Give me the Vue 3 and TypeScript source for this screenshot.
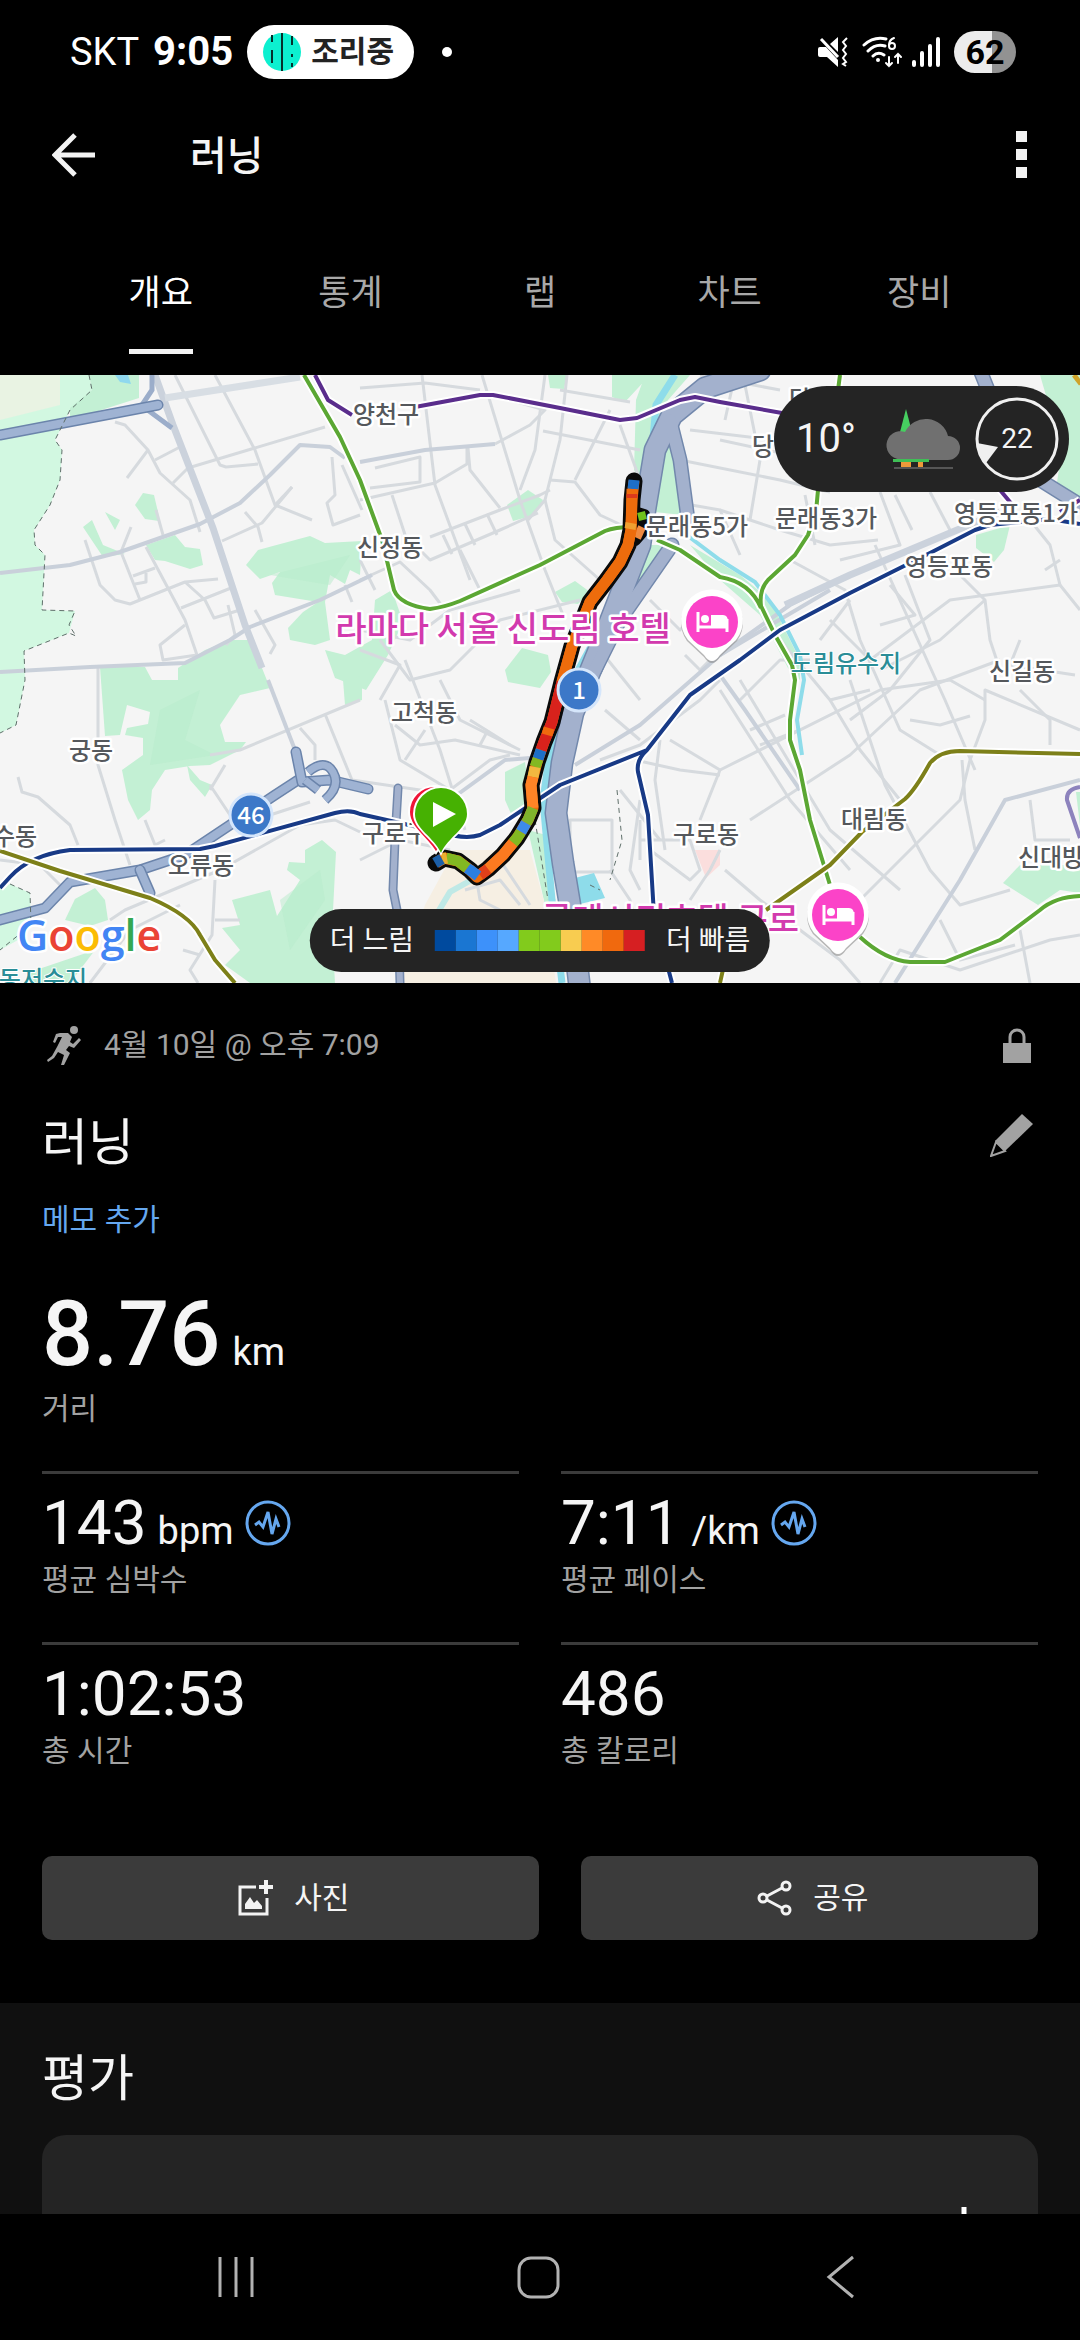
<script setup lang="ts">
import { ref } from 'vue'

interface MapLabel { text: string; x: number; y: number }
interface Segment { d: string; color: string }
interface Stat { value: string; unit?: string; label: string; zoned: boolean }

const tabs: string[] = ['개요', '통계', '랩', '차트', '장비']
const activeTab = ref<string>('개요')

const paceScale: string[] = [
  '#004a9e', '#1a76d2', '#3d91fa', '#56a8ff', '#82cb1c',
  '#82cb1c', '#f8cc50', '#ff8a27', '#f0690e', '#d61f22',
]

const stats: Stat[] = [
  { value: '143', unit: 'bpm', label: '평균 심박수', zoned: true },
  { value: '7:11', unit: '/km', label: '평균 페이스', zoned: true },
  { value: '1:02:53', label: '총 시간', zoned: false },
  { value: '486', label: '총 칼로리', zoned: false },
]

const labels: MapLabel[] = [
  { text: '양천구', x: 386, y: 423 },
  { text: '신정동', x: 390, y: 556 },
  { text: '문래동5가', x: 697, y: 535 },
  { text: '문래동3가', x: 826, y: 527 },
  { text: '영등포동1가', x: 1016, y: 522 },
  { text: '영등포동', x: 949, y: 575 },
  { text: '당', x: 763, y: 455 },
  { text: '당', x: 800, y: 408 },
  { text: '신길동', x: 1022, y: 680 },
  { text: '고척동', x: 424, y: 721 },
  { text: '궁동', x: 91, y: 759 },
  { text: '수동', x: 15, y: 845 },
  { text: '오류동', x: 201, y: 874 },
  { text: '구로구', x: 395, y: 842 },
  { text: '구로동', x: 706, y: 843 },
  { text: '대림동', x: 874, y: 828 },
  { text: '신대방', x: 1051, y: 866 },
]

const parks: string[] = [
  'M89 375H139V398L70 420L70 408L92 390Z',
  'M135 505L143 493L154 495L158 512L159 521L145 519Z',
  'M146 545L175 535L185 547L200 549L203 565L190 569L165 561L155 560Z',
  'M83 527L92 520L103 545L125 554L103 557L97 548ZM105 512L120 520L115 530Z',
  'M246 565L258 550L310 536L325 543L362 541L360 575L350 570L345 584L330 575L325 602L330 640L315 645L290 640L288 628L303 612L318 602L275 595L272 583L280 572L260 579Z',
  'M325 650L345 655L372 640L375 600L392 590L403 622L388 655L366 690L335 678Z',
  'M100 667H145L152 680H178V668L205 650L230 640L250 640L262 668L270 688L240 695L220 725L225 742L246 742L240 750L210 765L190 766L165 770L152 790L150 810L138 820L128 800L122 770L143 755L143 738L125 735L127 728L148 724L150 712L127 705L120 735L105 736Z',
  'M187 765L200 780L212 785L205 797L190 780Z',
  'M65 920L75 899L95 888L105 900L108 920L90 926Z',
  'M222 928L240 925L232 900L270 890L277 916L300 880L287 870L289 862L305 863L305 850L322 840L336 852L332 930L335 983H250L225 965L240 950Z',
  'M30 972L95 950L70 983H30Z',
  'M343 680L362 676V700L345 705Z',
  'M507 505L528 490L543 500L535 515L513 521Z',
  'M548 375H567L564 389L550 388ZM612 375H650L625 402L612 397Z',
  'M555 592L575 581L590 592L578 604L562 602Z',
  'M505 670L522 648L548 655L551 672L540 688L508 682Z',
  'M360 660L372 665L366 685L360 690Z',
  'M505 772L525 762L530 800L512 816L505 800Z',
  'M976 535L1010 525L1004 550L994 562L976 548Z',
  'M1040 375H1080V505L1055 495L1062 450Z',
  'M1003 883L1020 865H1080V893L1060 890L1038 905Z',
  'M1076 792H1080V826Z',
  'M482 975H500L498 983H480Z',
  'M645 375H690L668 400L650 440L646 490L634 470L636 400Z',
  'M664 432L672 444L682 515L655 512Z',
  'M650 545L672 545L630 610L606 640Z',
  'M690 545L740 575L770 600L800 660V680L788 668L760 615L720 580Z',
  'M528 830L546 835L556 905L545 905Z',
]

const minorRoads: string[] = [
  'M175 375L220 465L226 467L258 464', 'M215 375L255 450L275 505L312 520',
  'M155 460L180 447', 'M173 483L188 468L325 427', 'M275 505L292 487',
  'M115 422L125 425L148 450L160 473L190 500L200 532', 'M148 450L127 478',
  'M85 540L100 585L115 600L130 604L185 582L218 579', 'M131 527L121 552L140 600',
  'M133 576L155 568', 'M135 584L146 582V573', 'M146 547L185 620L197 655',
  'M181 608L231 588L240 610', 'M185 582L205 600L214 618L240 610', 'M222 541L262 523L292 487',
  'M197 655L163 660L160 645L185 625', 'M98 667V765L115 820L130 865', 'M18 777L22 792L38 797L70 825L78 845',
  'M255 610L275 645L270 654', 'M345 585L352 602', 'M332 457L335 495L327 503L333 525L360 515',
  'M342 465L362 510', 'M156 510L163 535', 'M245 512L258 527L262 542', 'M228 605L235 635L226 645',
  'M360 388L425 383L480 390', 'M422 375L435 485L470 580', 'M482 375L520 500L545 570L565 620',
  'M360 500L435 483L467 464V448', 'M375 468L420 457V482L370 488', 'M468 448L470 470L500 508',
  'M392 495L410 550', 'M495 444L530 425L545 410L510 400', 'M430 537L500 510L540 495L550 490',
  'M415 545L430 560L500 530L538 513', 'M443 535L452 554M465 524L475 545M487 514L497 535',
  'M545 375L535 450L520 490', 'M567 375L560 440L545 500L528 520', 'M543 431L640 450',
  'M550 480L575 482L600 515L632 530', 'M545 500L555 540L600 580L620 590', 'M610 410L575 480',
  'M360 580L400 562L430 590L445 610', 'M360 560L375 590', 'M460 550L480 590', 'M360 630L410 640L450 610L520 590',
  'M380 640L410 680L450 670L500 620L580 600', 'M405 660L440 750L465 830', 'M385 700L400 760L450 790L490 760L510 755',
  'M360 650L400 665L380 700', 'M440 680L460 720L520 750', 'M395 725L420 745L455 740L520 755', 'M405 760L425 730',
  'M480 745L488 730', 'M470 720L510 745', 'M580 625L600 630M560 390L630 402', 'M620 425L640 480',
  'M720 440L790 455L880 470', 'M690 430L775 440', 'M680 460L780 480L830 492', 'M745 385L760 460L750 520',
  'M720 510L780 530L830 545L878 540', 'M805 495L815 545', 'M880 492L900 545L840 560', 'M895 495L912 530',
  'M930 492L950 530', 'M680 503L720 510L740 555', 'M700 375L780 390', 'M735 375L725 420',
  'M790 560L845 590L860 640L900 730L940 755', 'M875 545L945 700L975 770', 'M905 575L930 640L890 690L850 720',
  'M780 640L830 700L860 750L900 800', 'M830 620L870 660L950 600L1060 585', 'M960 575L985 600L990 640L1000 670',
  'M985 600L940 640L880 670', 'M1060 585L1050 545L1030 520', 'M1060 585L1080 610', 'M1020 640L1010 665L1075 675',
  'M890 585L915 615L880 625', 'M1060 560L1045 570', 'M740 680L830 830L900 890', 'M720 690L790 800L850 870',
  'M720 770L880 690L950 680L985 700', 'M750 820L850 755L920 690L1000 660', 'M850 680L885 785L930 870L960 905L1010 890',
  'M830 700L870 690M750 730L785 715M760 745L800 730', 'M725 870L760 900L840 960L860 983',
  'M850 910L960 800L970 760L985 720V690L1080 730', 'M910 720L940 725L970 716', 'M962 760L965 800L975 850',
  'M1020 690L1050 720V745', 'M1030 800L1035 840H1070', 'M880 983L900 950L960 970L1050 940L1080 935',
  'M940 920L960 960L1015 945', 'M1020 930L1030 983', 'M850 600L820 640', 'M640 840H690L700 870L690 880L650 850',
  'M620 790L660 840M640 820V860', 'M635 760L680 770L720 775', 'M600 760L640 745L700 700L720 680',
  'M605 710L640 740', 'M600 650L640 700', 'M670 740L720 770L700 820', 'M660 740L655 780L665 850',
  'M610 870L630 900L640 940', 'M640 800L630 870L640 890', 'M570 820H612V872H570Z',
  'M360 860L400 840L450 850', 'M465 890L500 880L520 905', 'M475 870L480 900L500 910', 'M500 860L530 905',
  'M690 900L710 870L720 850', 'M210 755L240 750L360 700', 'M325 714L352 780L420 790L450 790',
  'M210 790L225 765M210 785L230 815', 'M300 728L315 745V760', 'M270 815L310 802', 'M145 820L155 845L165 840',
  'M110 920L125 910L220 870L300 825L335 820L360 832', 'M215 880L212 935L190 970L198 983',
  'M180 905L130 930L90 983', 'M0 860L40 865L60 885', 'M183 950L200 955M215 920L240 920',
  'M685 655L700 670L730 640M650 600L680 630L700 610', 'M740 700L780 660L810 660',
]

const majorRoads: string[] = [
  'M0 573L70 565L120 552L200 524L240 503L270 475L300 445L330 447L345 458',
  'M0 672L90 667L185 663L230 640L250 627L320 600L372 575',
  'M360 462L425 450L495 444', 'M268 680L295 750', 'M450 800L505 760L530 758',
  'M575 765L640 725L680 690L720 655L790 605L850 575', 'M720 655L830 590',
  'M895 983L960 880L1005 800L1080 780', 'M720 675L745 710L800 790',
]

const highways: string[] = [
  'M0 435L158 405',
  'M0 920L45 908L70 882L140 870L185 855L230 825L275 795L298 780',
  'M296 752L302 782L330 780L368 789', 'M140 870L150 893',
]

const routePath =
  'M634 481L632 500L631 530L628 545L620 562L607 580L590 602L582 622L572 646L562 682L552 722L544 742L537 762L531 785L533 808L528 820L517 838L503 855L488 869L477 877L470 870L458 861L444 858L436 863'

const routeSegments: Segment[] = [
  { d: 'M634 480L633 489', color: '#1d6fc7' },
  { d: 'M632 489L631 530L628 545L620 562L607 580L590 602L582 622L572 646L562 682', color: '#ee6c0c' },
  { d: 'M632 494V498', color: '#dc3a1c' },
  { d: 'M631 523L630 529', color: '#f0a030' },
  { d: 'M562 682L552 722L544 742L541 750', color: '#d8221c' },
  { d: 'M549 728L547 735', color: '#f0690e' },
  { d: 'M541 750L538 759', color: '#1d6fc7' },
  { d: 'M538 759L535 767', color: '#82b822' },
  { d: 'M535 767L533 777', color: '#f2b840' },
  { d: 'M533 777L531 785L533 808', color: '#ff8426' },
  { d: 'M533 808L528 820L526 823', color: '#7fb32c' },
  { d: 'M526 823L521 832', color: '#3d8bea' },
  { d: 'M521 832L517 838L513 843', color: '#82b822' },
  { d: 'M513 843L503 855L488 869', color: '#fb7a20' },
  { d: 'M488 869L480 875', color: '#e0401a' },
  { d: 'M478 876L470 870L467 868', color: '#2c7fe0' },
  { d: 'M467 868L458 861L446 858', color: '#82b822' },
  { d: 'M447 858L442 859', color: '#eab030' },
  { d: 'M442 859L435 863', color: '#1c5fa8' },
]
</script>

<template>
  <div class="screen">
    <header class="status">
      <span class="carrier">SKT</span>
      <span class="clock">9:05</span>
      <span class="chip">
        <svg width="38" height="38" viewBox="0 0 38 38" aria-hidden="true">
          <circle cx="19" cy="19" r="19" fill="#0cf0d0" />
          <path d="M19 0V38M9 2V9M9 17V30M29 3V12M29 21V24M29 30V34" stroke="#05302c" stroke-width="2" />
        </svg>
        조리중
      </span>
      <span class="dot"></span>
      <span class="signals">
        <svg width="30" height="30" viewBox="0 0 30 30" aria-hidden="true">
          <path d="M0 12Q0 10 2 10H8L20 23V30L9 20H2Q0 20 0 18ZM12 7L20 0V15Z" fill="#fff" />
          <path d="M3 2L20 20" stroke="#fff" stroke-width="3" />
          <path d="M29 1L25 5L28 9L25 13L28 17L25 21L28 25L25 27L28 29" fill="none" stroke="#fff" stroke-width="2" />
        </svg>
        <svg class="wifi" width="42" height="32" viewBox="0 0 42 32" aria-hidden="true">
          <g fill="none" stroke="#fff" stroke-width="3" stroke-linecap="round">
            <path d="M2 9Q12 0 24 3M6 15Q14 7 23 10M11 20Q16 15 22 19" />
            <path d="M32 2Q27 4 27 9" stroke-width="2" />
            <circle cx="30" cy="10" r="3" stroke-width="2" />
            <path d="M27 21V30M24 27L27 30L30 27M36 27V18M33 21L36 18L39 21" stroke-width="2" />
          </g>
          <circle cx="16" cy="24" r="2" fill="#fff" />
        </svg>
        <svg class="bars" width="28" height="30" viewBox="0 0 28 30" aria-hidden="true">
          <path d="M2 25V28M10 16V28M18 9V28M26 2V28" stroke="#fff" stroke-width="4" stroke-linecap="round" />
        </svg>
        <span class="battery">62</span>
      </span>
    </header>

    <div class="appbar">
      <button class="icon-btn" aria-label="뒤로">
        <svg width="44" height="44" viewBox="0 0 44 44">
          <path d="M43 22H4M23 2L3 22L23 42" fill="none" stroke="#f3f3f3" stroke-width="5" />
        </svg>
      </button>
      <h1>러닝</h1>
      <button class="icon-btn more" aria-label="더보기">
        <svg width="12" height="48" viewBox="0 0 12 48">
          <path d="M0 0H11V11H0ZM0 18H11V29H0ZM0 36H11V47H0Z" fill="#f3f3f3" />
        </svg>
      </button>
    </div>

    <nav class="tabs">
      <button v-for="tab in tabs" :key="tab" :class="{ active: tab === activeTab }" @click="activeTab = tab">
        <span>{{ tab }}</span>
      </button>
    </nav>

    <main class="content">
      <section class="map">
        <svg class="map-art" viewBox="0 375 1080 608" role="img" aria-label="경로 지도">
          <rect y="375" width="1080" height="608" fill="#f5f5f5" />
          <path d="M0 375H89L92 390L70 410L55 440L62 450L60 480L50 505L34 530L35 545L45 555L42 610L75 611L69 633L24 651L25 680L16 725L0 733Z" fill="#d2f8e1" />
          <path d="M0 375H60V405L0 420Z" fill="#e9f3e3" />
          <path d="M0 885L10 884L30 893L31 925L18 940L0 950Z" fill="#d2f8e1" />
          <g fill="#c3f0d4"><path v-for="d in parks" :key="d" :d="d" /></g>
          <path d="M160 710L200 690L185 740L215 755L150 765ZM280 900L320 870L325 900L290 950ZM270 575L350 555L330 585Z" fill="#b7ebcc" opacity=".5" />
          <path d="M455 850H530L545 905L556 983H400L425 905Z" fill="#f6efe3" />
          <path d="M695 850H720V865L706 878Z" fill="#fbdedd" />
          <path d="M115 375H128L131 384L120 382Z" fill="#8fd8ee" />

          <g class="road minor"><path v-for="d in minorRoads" :key="d" :d="d" /></g>
          <g class="road major"><path v-for="d in majorRoads" :key="d" :d="d" /></g>
          <path class="road arterial" d="M155 375L173 425L213 528L245 625L262 668" />
          <path class="road arterial pale" d="M165 398L300 377" />
          <path class="road arterial" d="M785 605L850 575L1000 512" />
          <path d="M142 405L152 390V375M145 408L172 428" fill="none" stroke="#9badca" stroke-width="5" />

          <g fill="none" stroke="#8edcea">
            <path d="M675 375L656 405L652 450L646 510M648 545L600 630L570 685L550 750L543 800L552 900L562 983" stroke-width="7" />
            <path d="M680 530L720 560L755 582L780 615L800 655L804 680L797 720L802 755" stroke-width="4" />
            <path d="M475 878L450 892L438 912" stroke-width="6" stroke="#bfe9e6" />
          </g>
          <path d="M575 878L594 873L605 898L580 904Z" fill="#8edcea" />

          <g v-for="d in highways" :key="d" class="highway">
            <path :d="d" class="edge" /><path :d="d" class="fill" />
          </g>
          <g class="river-road">
            <path class="edge" d="M760 370L705 388L672 415L655 450L645 510L640 545L603 640L573 713L562 763L556 813L563 863L570 905L580 990" />
            <path class="edge thin" d="M670 420L680 460L688 520M672 545L620 620L595 670" />
            <path class="edge thin" d="M980 370L1000 420L1040 480L1085 508" />
            <path class="edge thinner" d="M398 788L395 840L393 890L398 915L400 983" />
            <path class="fill" d="M760 370L705 388L672 415L655 450L645 510L640 545L603 640L573 713L562 763L556 813L563 863L570 905L580 990" />
            <path class="fill thin" d="M670 420L680 460L688 520M672 545L620 620L595 670" />
            <path class="fill thin" d="M980 370L1000 420L1040 480L1085 508" />
            <path class="fill thinner" d="M398 788L395 840L393 890L398 915L400 983" />
          </g>
          <g fill="none" stroke="#6b84ab" stroke-width="10">
            <path d="M308 772Q325 758 333 772T325 800M305 780L318 790" />
            <path d="M308 772Q325 758 333 772T325 800M305 780L318 790" stroke="#9fb3d3" stroke-width="7" />
          </g>
          <path class="border" d="M89 375L92 390L70 410L55 440L62 450L60 480L50 505L34 530L35 545L45 555L42 610L75 611L69 625L76 636L69 633L24 651L25 680L16 725L0 733M10 884L30 893L31 925L0 950M535 820L548 900M617 790L622 840L610 880M590 885L600 890" />

          <g class="rail">
            <path v-for="w in ['casing', 'line']" :key="w" :class="w" style="--c: #5a2d8c" d="M315 375L328 400L352 415M415 407L480 395H493L560 408L620 420L637 418L680 400L695 397L720 402L782 413M1000 490L1015 508M1080 500L1060 512" />
            <path v-for="w in ['casing', 'line']" :key="w" :class="w" style="--c: #5ba733" d="M304 375L340 437L360 480L382 540L388 565L394 590Q400 605 430 609Q445 607 460 601L540 565L605 531Q615 527 632 527M657 540L680 550L720 577Q750 582 761 608M840 375L838 390M818 490L816 512L808 535L795 555L768 580Q759 590 761 606L775 635L792 665L795 680L790 720V740L800 770L810 820L830 885M860 937Q885 960 910 962H945L1000 940L1040 910Q1055 897 1080 896" />
            <path v-for="w in ['casing', 'line']" :key="w" :class="w" style="--c: #183a86" d="M1080 524L1050 519L990 525L975 530L930 553L850 593L780 630L740 660L690 695L647 750L560 785L500 825L480 835Q465 840 440 832L360 814Q350 809 335 813L215 846L200 849L70 850Q30 855 10 877L0 888M647 750Q636 760 638 772L648 815L654 915L672 983" />
            <path v-for="w in ['casing', 'line']" :key="w" :class="w" style="--c: #7d8019" d="M0 851L60 871L150 898Q190 915 200 935L215 960L235 983M766 910L830 865L862 832L905 799Q915 790 930 763Q940 751 960 751L1080 754M724 965L720 983" />
            <path d="M1080 787Q1066 789 1067 800L1080 838" stroke="#8d83bd" stroke-width="4" />
            <path d="M1074 375L1081 384" stroke="#cfa32a" stroke-width="5" />
          </g>

          <g class="badge">
            <circle cx="251" cy="815" r="21" />
            <text x="251" y="824">46</text>
          </g>

          <path :d="routePath" class="route-edge" />
          <path d="M634 512L644 515L642 532L635 540" class="route-edge loop" />
          <path d="M641 512L643 520" class="route-fill loop" stroke="#6fc21c" />
          <path d="M642 527L637 538" class="route-fill loop" stroke="#f08a40" />
          <path :d="routePath" class="route-fill" stroke="#ee6c0c" />
          <path v-for="s in routeSegments" :key="s.d" :d="s.d" class="route-fill" :stroke="s.color" />

          <g class="badge">
            <circle cx="579" cy="690" r="21" />
            <text x="579" y="699">1</text>
          </g>

          <text v-for="l in labels" :key="l.text + l.x" :x="l.x" :y="l.y" class="place">{{ l.text }}</text>
          <text x="846" y="672" class="place water">도림유수지</text>
          <text x="43" y="988" class="place water">동저수지</text>
          <text x="503" y="641" class="hotel">라마다 서울 신도림 호텔</text>
          <text x="670" y="932" class="hotel">롯데시티호텔 구로</text>

          <g v-for="p in [[712, 622], [838, 915]]" :key="p[0]" :transform="`translate(${p[0]} ${p[1]})`">
            <path d="M0 41Q-4 41 -8 35L-25 19A31 31 0 1 1 25 19L8 35Q4 41 0 41Z" fill="#8b8b8b" opacity=".6" />
            <path d="M0 39Q-4 39 -8 33L-24 18A31 31 0 1 1 24 18L8 33Q4 39 0 39Z" fill="#fff" />
            <circle r="26" fill="#fb43c8" />
            <path d="M-14 -10V10M-14 5H15M15 10V-3" stroke="#fff" stroke-width="3" fill="none" />
            <circle cx="-7" cy="-3" r="4" fill="#fff" />
            <path d="M-1 -7H11Q16 -7 16 0V4H-1Z" fill="#fff" />
          </g>

          <path d="M436 853C428 838 409 828 409 812A26 26 0 0 1 461 812C461 828 445 838 436 853Z" fill="#ef1438" stroke="#fff" stroke-width="2" />
          <path d="M441 856C434 839 413 830 413 814A28 28 0 0 1 469 814C469 830 448 839 441 856Z" fill="#fff" />
          <path d="M441 853C434 837 415 829 415 814A26 26 0 0 1 467 814C467 829 448 837 441 853Z" fill="#46b102" />
          <path d="M433 802L456 814L433 827Z" fill="#fff" />

          <text x="17" y="951" class="google"><tspan fill="#4285f4">G</tspan><tspan fill="#ea4335">o</tspan><tspan fill="#fbbc05">o</tspan><tspan fill="#4285f4">g</tspan><tspan fill="#34a853">l</tspan><tspan fill="#ea4335">e</tspan></text>
        </svg>

        <div class="weather">
          <span class="temp">10°</span>
          <svg width="76" height="62" viewBox="0 0 76 62" aria-label="흐림">
            <path d="M21 1L27 24H15Z" fill="#46cf60" />
            <path d="M18 51A14 14 0 1 1 20 24A23 23 0 0 1 63 28A12 12 0 0 1 63 52H18Z" fill="#707070" />
            <path d="M8 51H44V54H8Z" fill="#3fbf56" />
            <path d="M16 54H26V59H16ZM33 54H38V59H33Z" fill="#ee9a3a" />
            <path d="M9 60H68" stroke="#565656" stroke-width="2" />
          </svg>
          <span class="wind">
            <svg width="84" height="84" viewBox="0 0 84 84" aria-hidden="true">
              <circle cx="42" cy="42" r="40" fill="none" stroke="#f0f0f0" stroke-width="3" />
              <path d="M2 46L23 50L11 66Q4 58 2 46Z" fill="#f0f0f0" />
            </svg>
            <b>22</b>
          </span>
        </div>

        <div class="legend">
          <span>더 느림</span>
          <span class="scale"><i v-for="(c, i) in paceScale" :key="i" :style="{ background: c }"></i></span>
          <span>더 빠름</span>
        </div>
      </section>

      <section class="summary">
        <div class="meta">
          <svg width="40" height="40" viewBox="0 0 40 40" aria-hidden="true">
            <circle cx="32" cy="5" r="4" fill="#a2a2a2" />
            <path d="M18 8L26 8L30 12L28 17L31 19L37 13L39 15L32 23L27 21L24 25L28 28L22 40H19L22 30L16 27L12 33L6 37L5 35L10 31L15 22L20 12L16 12L13 18L11 17L14 9Z" fill="#a2a2a2" />
          </svg>
          <span>4월 10일 @ 오후 7:09</span>
          <svg class="lock" width="28" height="36" viewBox="0 0 28 36" aria-label="비공개">
            <path d="M0 16H28V36H0Z" fill="#a2a2a2" />
            <path d="M7 18V10A7 7 0 0 1 21 10V18" fill="none" stroke="#a2a2a2" stroke-width="3" />
          </svg>
        </div>
        <div class="title-row">
          <h2>러닝</h2>
          <button class="icon-btn" aria-label="편집">
            <svg width="44" height="44" viewBox="0 0 44 44">
              <path d="M32 1L43 11L15 38L5 28Z" fill="#a2a2a2" />
              <path d="M6 29L1 43L15 38Z" fill="#000" stroke="#a2a2a2" stroke-width="2" />
            </svg>
          </button>
        </div>
        <a class="memo" href="#memo">메모 추가</a>

        <p class="distance"><strong>8.76</strong><span class="unit">km</span></p>
        <p class="caption">거리</p>

        <dl class="stats">
          <div v-for="s in stats" :key="s.label" class="stat">
            <dd>
              <span>{{ s.value }}</span>
              <span v-if="s.unit" class="unit">{{ s.unit }}</span>
              <button v-if="s.zoned" class="icon-btn" :aria-label="s.label + ' 차트'">
                <svg width="46" height="46" viewBox="0 0 46 46" fill="none" stroke="#65a7ef">
                  <circle cx="23" cy="23" r="21" stroke-width="3" />
                  <path d="M10 25L14 22L18 27L23 12L27 34L31 19L34 27" stroke-width="3" />
                </svg>
              </button>
            </dd>
            <dt class="caption">{{ s.label }}</dt>
          </div>
        </dl>

        <div class="actions">
          <button class="photo">
            <svg width="36" height="36" viewBox="0 0 36 36" aria-hidden="true">
              <path d="M18 7H2V34H29V18" fill="none" stroke="#f3f3f3" stroke-width="3" />
              <path d="M28 0V14M21 7H35" stroke="#f3f3f3" stroke-width="4" />
              <path d="M7 29V24L12 17L16 23L19 20L24 26V29Z" fill="#f3f3f3" />
            </svg>
            사진
          </button>
          <button class="share">
            <svg width="36" height="36" viewBox="0 0 36 36" fill="none" stroke="#f3f3f3" stroke-width="3" aria-hidden="true">
              <circle cx="6" cy="18" r="4" /><circle cx="29" cy="6" r="4" /><circle cx="29" cy="30" r="4" />
              <path d="M10 16L25 8M10 20L25 28" />
            </svg>
            공유
          </button>
        </div>
      </section>

      <section class="rating">
        <h2>평가</h2>
        <div class="card">
          <button class="icon-btn" aria-label="평가 추가">
            <svg width="44" height="44" viewBox="0 0 44 44">
              <path d="M22 0V44M0 22H44" stroke="#fff" stroke-width="5" />
            </svg>
          </button>
        </div>
      </section>
    </main>

    <nav class="system-nav">
      <button class="icon-btn" aria-label="최근 앱">
        <svg width="44" height="44" viewBox="0 0 44 44"><path d="M6 2V42M22 2V42M38 2V42" stroke="#b2b2b2" stroke-width="3" /></svg>
      </button>
      <button class="icon-btn" aria-label="홈">
        <svg width="44" height="44" viewBox="0 0 44 44"><rect x="3" y="3" width="39" height="39" rx="12" fill="none" stroke="#b2b2b2" stroke-width="3" /></svg>
      </button>
      <button class="icon-btn" aria-label="뒤로 가기">
        <svg width="44" height="44" viewBox="0 0 44 44"><path d="M36 2L12 22L36 42" fill="none" stroke="#b2b2b2" stroke-width="3" /></svg>
      </button>
    </nav>
  </div>
</template>

<style>
html,
body {
  margin: 0;
  background: #000;
}
</style>

<style scoped>
.screen {
  display: flex;
  flex-direction: column;
  height: 100vh;
  overflow: hidden;
  background: #000;
  color: #f5f5f5;
  font-family: Roboto, "Noto Sans CJK KR", sans-serif;
  font-size: 30px;
  line-height: 40px;
}
button {
  padding: 0;
  border: 0;
  background: none;
  color: inherit;
  font: inherit;
}
svg { display: block; flex: none; }
h1, h2, p, dl, dd { margin: 0; }
.icon-btn { display: flex; flex: none; }

.status {
  display: flex;
  align-items: center;
  flex: none;
  height: 104px;
  padding: 0 64px 0 70px;
  color: #fff;
}
.carrier { font-size: 38px; }
.clock { margin-left: 14px; font-size: 40px; font-weight: 700; }
.chip {
  display: flex;
  align-items: center;
  gap: 10px;
  height: 54px;
  margin-left: 14px;
  padding: 0 20px 0 16px;
  border-radius: 27px;
  background: #fff;
  color: #222;
  font-weight: 700;
}
.dot { width: 10px; height: 10px; margin-left: 28px; border-radius: 5px; background: #fff; }
.signals { display: flex; align-items: center; margin-left: auto; }
.wifi { margin-left: 14px; }
.bars { margin-left: 8px; }
.battery {
  margin-left: 14px;
  width: 62px;
  border-radius: 22px;
  background: linear-gradient(90deg, #ececec 62%, #929292 62%);
  color: #000;
  font-size: 34px;
  font-weight: 700;
  line-height: 42px;
  text-align: center;
}

.appbar {
  display: flex;
  align-items: center;
  flex: none;
  height: 102px;
  padding: 0 52px;
}
.appbar h1 { margin-left: 94px; padding-top: 4px; font-size: 40px; font-weight: 500; }
.more { margin-left: auto; }

.tabs { display: flex; flex: none; padding: 68px 66px 21px; }
.tabs button { display: flex; flex: 1; justify-content: center; color: #a8a8a8; font-size: 35px; }
.tabs span { padding-bottom: 35px; border-bottom: 5px solid transparent; }
.tabs .active { color: #fff; }
.tabs .active span { border-color: #f3f3f3; }

.content { flex: 1; min-height: 0; overflow: hidden; }

.map { position: relative; overflow: hidden; }
.map-art { width: 100%; height: auto; font-family: "Noto Sans CJK KR", sans-serif; }
.road { fill: none; stroke-linejoin: round; }
.minor { stroke: #d6dade; stroke-width: 3; }
.major { stroke: #c9d0da; stroke-width: 4; }
.arterial { stroke: #cbd2dc; stroke-width: 7; }
.pale { stroke: #d8dee4; }
.highway path, .river-road path { fill: none; stroke-linecap: round; stroke-linejoin: round; }
.highway .edge { stroke: #6b84ab; stroke-width: 11; }
.highway .fill { stroke: #9fb3d3; stroke-width: 8; }
.river-road .edge { stroke: #7288ac; stroke-width: 23; }
.river-road .fill { stroke: #a3b1cd; stroke-width: 20; }
.river-road .edge.thin { stroke-width: 15; }
.river-road .fill.thin { stroke-width: 12; }
.river-road .edge.thinner { stroke-width: 9; }
.river-road .fill.thinner { stroke-width: 6; }
.border { fill: none; stroke: #5f6f6a; stroke-width: 1; stroke-dasharray: 5 4; }
.rail path { fill: none; stroke-linejoin: round; }
.rail .casing { stroke: #fff; stroke-width: 8; }
.rail .line { stroke: var(--c); stroke-width: 4; }
.badge circle { fill: #3c78c8; stroke: #d5e6fb; stroke-width: 3; }
.badge text { fill: #fff; font-size: 24px; font-weight: 500; text-anchor: middle; }
.route-edge { fill: none; stroke: #0a0a0a; stroke-width: 17; stroke-linejoin: round; stroke-linecap: round; }
.route-fill { fill: none; stroke-width: 11; stroke-linejoin: round; }
.route-edge.loop { stroke-width: 12; }
.route-fill.loop { stroke-width: 8; }
.place, .hotel, .google { paint-order: stroke; stroke: #fff; stroke-width: 5px; stroke-linejoin: round; }
.place { fill: #55585c; font-size: 24px; font-weight: 500; text-anchor: middle; }
.water { fill: #2a8d97; stroke-width: 2px; }
.hotel { fill: #d23aae; font-size: 34px; font-weight: 500; text-anchor: middle; }
.google { font-family: "Open Sans", sans-serif; font-size: 43px; font-weight: 600; }

.weather {
  position: absolute;
  top: 11px;
  right: 11px;
  display: flex;
  align-items: center;
  height: 106px;
  padding: 0 10px 0 22px;
  border-radius: 53px;
  background: #242424;
}
.temp { width: 89px; font-size: 40px; }
.wind { position: relative; margin-left: 14px; }
.wind b {
  position: absolute;
  inset: 0;
  font-size: 28px;
  font-weight: 400;
  line-height: 84px;
  text-align: center;
}
.legend {
  position: absolute;
  bottom: 11px;
  left: 50%;
  transform: translateX(-50%);
  display: flex;
  align-items: center;
  gap: 21px;
  height: 63px;
  padding: 0 20px;
  border-radius: 32px;
  background: #242424;
  font-size: 28px;
  white-space: nowrap;
}
.scale { display: flex; }
.scale i { width: 21px; height: 21px; }

.summary { padding: 40px 42px 63px; }
.meta { display: flex; align-items: center; height: 44px; color: #a2a2a2; }
.meta span { margin-left: 22px; }
.lock { margin-left: auto; margin-right: 7px; }
.title-row { display: flex; justify-content: space-between; align-items: flex-start; margin-top: 46px; padding-right: 4px; }
h2 { font-size: 50px; font-weight: 400; line-height: 60px; }
.memo { display: block; width: max-content; margin-top: 27px; color: #65a7ef; text-decoration: none; }
.distance { display: flex; align-items: baseline; gap: 12px; height: 100px; margin-top: 45px; line-height: 100px; }
.distance strong { font-size: 90px; font-weight: 500; }
.unit { font-size: 38px; }
.caption { margin-top: 4px; color: #a2a2a2; }
.stats { display: grid; grid-template-columns: 1fr 1fr; gap: 42px; margin-top: 42px; }
.stat { display: flex; flex-direction: column; padding-top: 14px; border-top: 3px solid #3b3b3b; }
.stat dd { display: flex; align-items: baseline; gap: 11px; height: 70px; font-size: 62px; line-height: 70px; }
.stat .caption { margin-top: 2px; }
.stat .icon-btn { align-self: center; }
.actions { display: flex; gap: 42px; margin-top: 85px; }
.actions button {
  display: flex;
  align-items: center;
  justify-content: center;
  gap: 20px;
  height: 84px;
  padding-left: 6px;
  border-radius: 10px;
  background: #3b3b3b;
}
.actions .photo { flex: 12; }
.actions .share { flex: 11; }

.rating { padding: 46px 42px; background: #101010; }
.card {
  display: flex;
  justify-content: flex-end;
  align-items: flex-start;
  height: 200px;
  margin-top: 26px;
  padding: 72px 52px 0;
  border-radius: 24px;
  background: #242424;
}

.system-nav {
  display: flex;
  flex: none;
  justify-content: space-between;
  align-items: center;
  height: 126px;
  padding: 0 219px 0 214px;
  background: #000;
}
</style>
